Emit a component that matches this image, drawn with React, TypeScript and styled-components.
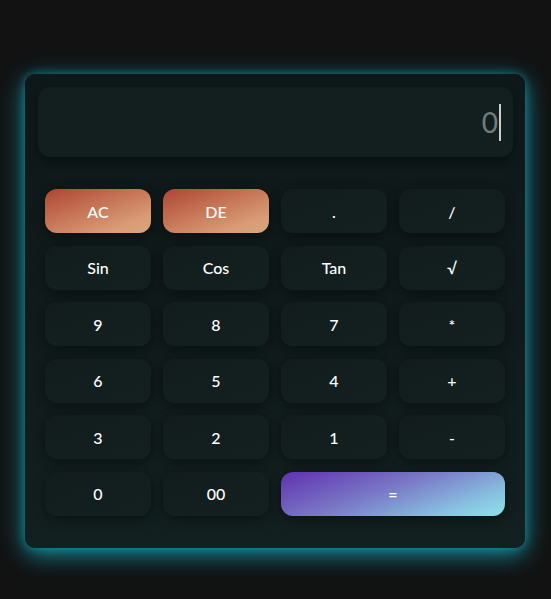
import React from "react";
import styled, { createGlobalStyle } from "styled-components";

const Global = createGlobalStyle`
  html, body { margin: 0; padding: 0; background: #121212; }
  body { font-family: "Lato", "Open Sans", sans-serif; }
`;

const Page = styled.div`
  display: flex;
  align-items: flex-start;
  justify-content: flex-start;
  padding: 74px 0 0 25px;
  min-height: 599px;
  box-sizing: border-box;
`;

const Calculator = styled.div`
  width: 500px;
  box-sizing: border-box;
  padding: 13px 12px 32px 13px;
  border-radius: 10px;
  background: linear-gradient(180deg, #0f1818 0%, #111b1b 60%, #132020 100%);
  box-shadow: 0 6px 24px rgba(22, 170, 190, 0.85), 0 0 8px rgba(20, 140, 160, 0.6);
`;

const Display = styled.div`
  height: 70px;
  border-radius: 12px;
  background: #131f1f;
  box-shadow: 0 4px 10px rgba(0, 0, 0, 0.45);
  display: flex;
  align-items: center;
  justify-content: flex-end;
  padding-right: 12px;
  box-sizing: border-box;
`;

const Value = styled.span`
  font-size: 28px;
  color: #6f7d7d;
  line-height: 1;
`;

const Caret = styled.span`
  width: 2px;
  height: 37px;
  background: #c9cfcf;
  margin-left: 1px;
`;

const Keys = styled.div`
  margin-top: 32px;
  padding: 0 8px 0 7px;
  display: grid;
  grid-template-columns: repeat(4, 106px);
  grid-auto-rows: 44px;
  column-gap: 12px;
  row-gap: 12.6px;
`;

type Variant = "plain" | "danger" | "equal";

const Key = styled.button<{ $variant?: Variant; $span?: number }>`
  border: none;
  border-radius: 12px;
  font-family: "Lato", "Open Sans", sans-serif;
  font-size: 16px;
  font-weight: 500;
  color: #ffffff;
  cursor: pointer;
  grid-column: span ${(p) => p.$span ?? 1};
  background: ${(p) =>
    p.$variant === "danger"
      ? "linear-gradient(160deg, #ad4534 0%, #c77758 45%, #d99d77 80%, #d8a67d 100%)"
      : p.$variant === "equal"
      ? "linear-gradient(160deg, #5f31b0 0%, #7a7ac6 45%, #88c2e0 80%, #8fe1ea 100%)"
      : "linear-gradient(160deg, #121c1c 0%, #142020 100%)"};
  box-shadow: 0 3px 12px rgba(0, 0, 0, 0.45);
`;

const keys: { label: string; variant?: Variant; span?: number }[] = [
  { label: "AC", variant: "danger" },
  { label: "DE", variant: "danger" },
  { label: "." },
  { label: "/" },
  { label: "Sin" },
  { label: "Cos" },
  { label: "Tan" },
  { label: "√" },
  { label: "9" },
  { label: "8" },
  { label: "7" },
  { label: "*" },
  { label: "6" },
  { label: "5" },
  { label: "4" },
  { label: "+" },
  { label: "3" },
  { label: "2" },
  { label: "1" },
  { label: "-" },
  { label: "0" },
  { label: "00" },
  { label: "=", variant: "equal", span: 2 },
];

export default function App() {
  return (
    <>
      <Global />
      <Page>
        <Calculator>
          <Display>
            <Value>0</Value>
            <Caret />
          </Display>
          <Keys>
            {keys.map((k) => (
              <Key key={k.label} $variant={k.variant} $span={k.span}>
                {k.label}
              </Key>
            ))}
          </Keys>
        </Calculator>
      </Page>
    </>
  );
}
